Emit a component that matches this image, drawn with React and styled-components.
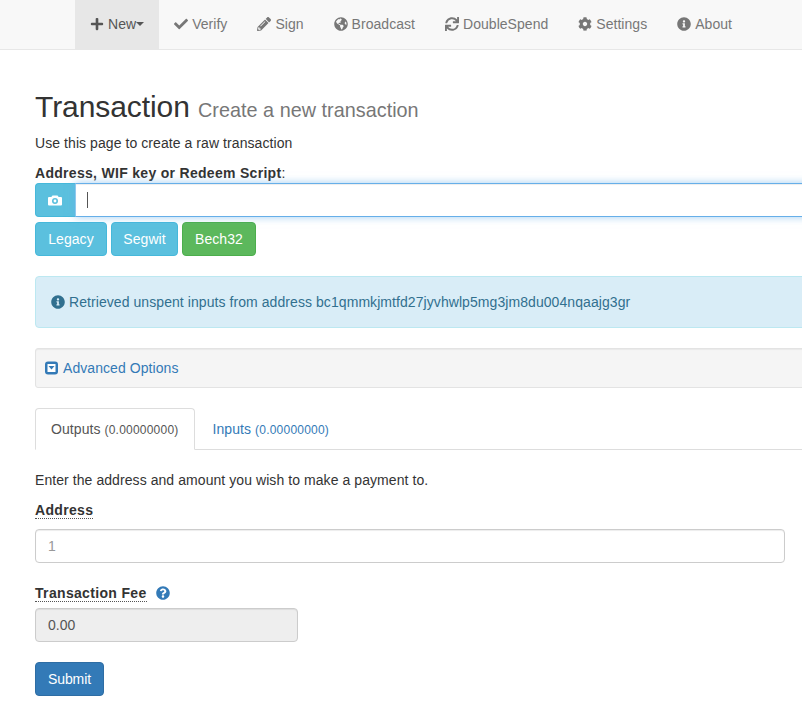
import React from "react";
import styled, { createGlobalStyle } from "styled-components";
import { FaPlus, FaCheck, FaPencilAlt, FaGlobeAmericas, FaSync, FaCog, FaInfoCircle, FaQuestionCircle } from "react-icons/fa";

const Global = createGlobalStyle`
  html, body { margin: 0; padding: 0; height: 707px; overflow: hidden; background: #fff; }
  body { font-family: "Liberation Sans", Arial, sans-serif; font-size: 14px; line-height: 20px; color: #333; letter-spacing: .07px; }
  * { box-sizing: border-box; }
  svg { display: inline-block; vertical-align: -2px; }
`;

const Navbar = styled.nav`
  display: flex; height: 50px; padding-left: 75px;
  background: #f8f8f8; border-bottom: 1px solid #e7e7e7;
`;
const NavItem = styled.a`
  display: flex; align-items: center; gap: 4px; height: 49px; padding: 0 15px 2px;
  color: ${p => (p.$active ? "#555" : "#777")};
  background: ${p => (p.$active ? "#e7e7e7" : "transparent")};
  white-space: nowrap; letter-spacing: .04px;
`;
const Caret = styled.span`
  width: 0; height: 0; margin-left: -4px;
  border-top: 4px solid; border-left: 4px solid transparent; border-right: 4px solid transparent;
`;
const Page = styled.main`
  width: 900px; padding: 37px 15px 0 35px;
`;
const Title = styled.h1`
  margin: 0 0 3px; font-size: 30px; font-weight: 400; line-height: 40px; color: #333; white-space: nowrap; letter-spacing: -.08px;
`;
const TitleSmall = styled.small`
  font-size: 19.8px; color: #777; letter-spacing: .03px;
`;
const Para = styled.p`
  margin: 0 0 10px;
`;
const Label = styled.label`
  display: block; margin-bottom: 0; font-weight: 400; height: 20px;
`;
const Strong = styled.b`
  font-weight: 700; letter-spacing: .3px;
`;
const InputGroup = styled.div`
  position: relative; display: flex; height: 34px; width: 850px;
`;
const Addon = styled.span`
  flex: 0 0 40px; display: flex; align-items: center; justify-content: center; padding-right: 2px;
  background: #5bc0de; border: 1px solid #46b8da; border-right: 0;
  border-radius: 4px 0 0 4px; color: #fff; font-size: 14px;
`;
const FocusInput = styled.input`
  flex: 1; height: 34px; padding: 6px 12px; border: 1px solid #66afe9; border-left-color: #8fc8ee; outline: 0; background: #fff;
  box-shadow: inset 0 1px 1px rgba(0,0,0,.075), 0 0 8px rgba(102,175,233,.6);
  font: inherit;
`;
const TextCaret = styled.span`
  position: absolute; left: 52px; top: 9px; width: 1px; height: 16px; background: #555;
`;
const ButtonRow = styled.div`
  display: flex; gap: 4px; margin-top: 5px;
`;
const Button = styled.button`
  width: ${p => p.$w}px; height: 34px; padding: 6px 0; border-radius: 4px; font: inherit; color: #fff; letter-spacing: .05px;
  background: ${p => p.$bg}; border: 1px solid ${p => p.$border};
`;
const Alert = styled.div`
  margin-top: 20px; width: 850px; height: 52px; padding: 15px; display: flex; align-items: center; gap: 4px;
  color: #31708f; background: #d9edf7; border: 1px solid #bce8f1; border-radius: 4px; white-space: nowrap;
`;
const Well = styled.div`
  margin-top: 20px; width: 850px; height: 40px; padding: 9px; display: flex; align-items: center; gap: 4px;
  background: #f5f5f5; border: 1px solid #e3e3e3; border-radius: 3px;
  box-shadow: inset 0 1px 1px rgba(0,0,0,.05);
`;
const Link = styled.a`
  color: #337ab7;
`;
const Tabs = styled.div`
  margin-top: 20px; width: 850px; height: 42px; display: flex; border-bottom: 1px solid #ddd;
`;
const Tab = styled.div`
  height: 42px; padding: 10px 15px; border-radius: 4px 4px 0 0; white-space: nowrap;
  margin-right: 2px; border: 1px solid ${p => (p.$active ? "#ddd" : "transparent")};
  border-bottom-color: ${p => (p.$active ? "#fff" : "transparent")};
  color: ${p => (p.$active ? "#555" : "#337ab7")};
  background: ${p => (p.$active ? "#fff" : "transparent")};
`;
const Small = styled.small`
  font-size: 12px; letter-spacing: .22px;
`;
const Intro = styled.p`
  margin: 20px 0 0;
`;
const Field = styled.div`
  margin-top: ${p => p.$top}px;
`;
const Abbr = styled.abbr`
  font-weight: 700; color: #333; border-bottom: 1px dotted #555; letter-spacing: .33px;
`;
const TextInput = styled.input`
  display: block; width: ${p => p.$w}px; height: 34px; padding: 6px 12px; margin-top: ${p => p.$mt}px;
  border: 1px solid #ccc; border-radius: 4px; font: inherit; color: #555; outline: 0;
  background: ${p => (p.disabled ? "#eee" : "#fff")};
  box-shadow: inset 0 1px 1px rgba(0,0,0,.075);
  opacity: 1;
  &::placeholder { color: #999; opacity: 1; }
  &:disabled { -webkit-text-fill-color: #555; }
`;
const HelpIcon = styled.span`
  margin-left: 9px; color: #337ab7;
`;
const Submit = styled(Button)`
  margin-top: 20px; display: block; letter-spacing: -.1px;
`;

const CollapseDown = () => (
  <svg width="14" height="14" viewBox="0 0 14 14">
    <rect x="0" y="0.5" width="13" height="13" rx="3" fill="#337ab7" />
    <rect x="2.5" y="3" width="8" height="8" fill="#fff" />
    <path d="M3.5 5h6l-3 3.5z" fill="#337ab7" />
  </svg>
);

const CameraIcon = () => (
  <svg width="14" height="12" viewBox="0 0 14 12">
    <path d="M4.5 1.5h5l1.2 1.5H13a1 1 0 0 1 1 1v6.5a1 1 0 0 1-1 1H1a1 1 0 0 1-1-1V4a1 1 0 0 1 1-1h2.3z" fill="#fff" />
    <circle cx="7" cy="7" r="3" fill="#5bc0de" />
    <circle cx="7" cy="7" r="1.4" fill="#fff" />
  </svg>
);

const items = [
  [FaCheck, "Verify"],
  [FaPencilAlt, "Sign"],
  [FaGlobeAmericas, "Broadcast"],
  [FaSync, "DoubleSpend"],
  [FaCog, "Settings"],
  [FaInfoCircle, "About"],
];

export default function App() {
  return (
    <>
      <Global />
      <Navbar>
        <NavItem $active><FaPlus size={14} />New<Caret /></NavItem>
        {items.map(([Icon, text]) => (
          <NavItem key={text}><Icon size={14} />{text}</NavItem>
        ))}
      </Navbar>
      <Page>
        <Title>Transaction <TitleSmall>Create a new transaction</TitleSmall></Title>
        <Para>Use this page to create a raw transaction</Para>
        <Label><Strong>Address, WIF key or Redeem Script</Strong>:</Label>
        <InputGroup>
          <Addon><CameraIcon /></Addon>
          <FocusInput />
          <TextCaret />
        </InputGroup>
        <ButtonRow>
          <Button $w={72} $bg="#5bc0de" $border="#46b8da">Legacy</Button>
          <Button $w={67} $bg="#5bc0de" $border="#46b8da">Segwit</Button>
          <Button $w={74} $bg="#5cb85c" $border="#4cae4c">Bech32</Button>
        </ButtonRow>
        <Alert>
          <FaInfoCircle size={14} />
          <span>Retrieved unspent inputs from address bc1qmmkjmtfd27jyvhwlp5mg3jm8du004nqaajg3gr</span>
        </Alert>
        <Well>
          <CollapseDown />
          <Link>Advanced Options</Link>
        </Well>
        <Tabs>
          <Tab $active>Outputs <Small>(0.00000000)</Small></Tab>
          <Tab>Inputs <Small>(0.00000000)</Small></Tab>
        </Tabs>
        <Intro>Enter the address and amount you wish to make a payment to.</Intro>
        <Field $top={10}>
          <Abbr>Address</Abbr>
          <TextInput $w={750} $mt={9} placeholder="1" />
        </Field>
        <Field $top={20}>
          <Abbr>Transaction Fee</Abbr>
          <HelpIcon><FaQuestionCircle size={14} /></HelpIcon>
          <TextInput $w={263} $mt={5} disabled value="0.00" readOnly />
        </Field>
        <Submit $w={69} $bg="#337ab7" $border="#2e6da4">Submit</Submit>
      </Page>
    </>
  );
}
